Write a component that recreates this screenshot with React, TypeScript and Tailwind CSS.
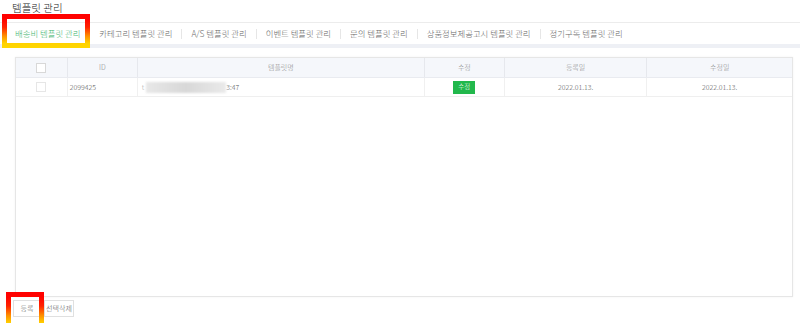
import React from "react";

const TABS = [
  "배송비 템플릿 관리",
  "카테고리 템플릿 관리",
  "A/S 템플릿 관리",
  "이벤트 템플릿 관리",
  "문의 템플릿 관리",
  "상품정보제공고시 템플릿 관리",
  "정기구독 템플릿 관리",
];

const COLS = [
  { key: "check", label: "", w: "w-[52px]" },
  { key: "id", label: "ID", w: "w-[70px]" },
  { key: "name", label: "템플릿명", w: "w-[288px]" },
  { key: "edit", label: "수정", w: "w-[80px]" },
  { key: "created", label: "등록일", w: "w-[143px]" },
  { key: "updated", label: "수정일", w: "w-[145px]" },
];

// annotation frame drawn over the screenshot
function Highlight({ className }: { className: string }) {
  return (
    <div
      className={`absolute pointer-events-none border-[5px] border-solid [border-image:linear-gradient(to_bottom,#ff0000_0%,#ff2200_35%,#ff9000_70%,#ffd800_100%)_1] ${className}`}
    />
  );
}

function Checkbox({ light }: { light?: boolean }) {
  return (
    <span
      className={`inline-block w-[10px] h-[10px] bg-white border ${light ? "border-[#e6e6e6]" : "border-[#d8d8d8]"}`}
    />
  );
}

export default function App() {
  return (
    <div className="relative w-[800px] h-[323px] overflow-hidden bg-white font-['Noto_Sans_CJK_KR','Noto_Sans',sans-serif] text-[#333]">
      <div className="h-[22px] pl-[12px] pt-[1px] text-[10.5px] leading-[14px] font-light text-[#222]">템플릿 관리</div>

      {/* tabs */}
      <div className="h-[22px] border-t border-[#ececec] flex items-center pl-[15px] text-[8.4px] font-light text-[#666]">
        {TABS.map((t, i) => (
          <React.Fragment key={t}>
            {i > 0 && <span className="w-px h-[10px] bg-[#e6e6e6] mx-[9px]" />}
            <span className={i === 0 ? "text-[#3db46c]" : ""}>{t}</span>
          </React.Fragment>
        ))}
      </div>
      <div className="h-[4px] bg-[#eef0f5]" />

      {/* table */}
      <div className="px-[15px] pt-[9px]">
        <div className="h-[240px] w-[778px] border border-[#e6e6e6] shadow-[0_0_2px_rgba(0,0,0,0.06)]">
          <div className="flex h-[20px] bg-[#f5f7fb] border-b border-[#e9ebf0] text-[7px] font-light text-[#888]">
            {COLS.map((c, i) => (
              <div
                key={c.key}
                className={`${c.w} flex items-center justify-center ${i < COLS.length - 1 ? "border-r border-[#e6e8ed]" : ""}`}
              >
                {c.key === "check" ? <Checkbox /> : c.label}
              </div>
            ))}
          </div>
          <div className="flex h-[19px] border-b border-[#efefef] text-[7px] font-light text-[#555]">
            <div className="w-[52px] flex items-center justify-center border-r border-[#f0f0f0]">
              <Checkbox light />
            </div>
            <div className="w-[70px] flex items-center pl-[2px] border-r border-[#f0f0f0]">2099425</div>
            <div className="w-[288px] flex items-center pl-[4px] border-r border-[#f0f0f0]">
              <span className="text-[#aaa]">t</span>
              <span className="ml-[2px] w-[80px] h-[11px] bg-gradient-to-r from-[#e8e8e8] via-[#d8d8d8] to-[#eaeaea] blur-[1px]" />
              <span>3:47</span>
            </div>
            <div className="w-[80px] flex items-center justify-center border-r border-[#f0f0f0]">
              <span className="w-[22px] h-[13px] bg-[#22b84c] text-white flex items-center justify-center text-[6.5px]">수정</span>
            </div>
            <div className="w-[143px] flex items-center justify-center border-r border-[#f0f0f0]">2022.01.13.</div>
            <div className="w-[145px] flex items-center justify-center">2022.01.13.</div>
          </div>
        </div>
      </div>

      {/* buttons */}
      <div className="flex gap-[3px] pl-[13px] pt-[3px] text-[7px] font-light text-[#555]">
        <button className="w-[28px] h-[17px] border border-[#e0e0e0] bg-white">등록</button>
        <button className="w-[30px] h-[17px] border border-[#e0e0e0] bg-white">선택삭제</button>
      </div>

      <Highlight className="left-[2px] top-[14px] w-[88px] h-[34px]" />
      <Highlight className="left-[6px] top-[292px] w-[38px] h-[36px]" />
    </div>
  );
}
